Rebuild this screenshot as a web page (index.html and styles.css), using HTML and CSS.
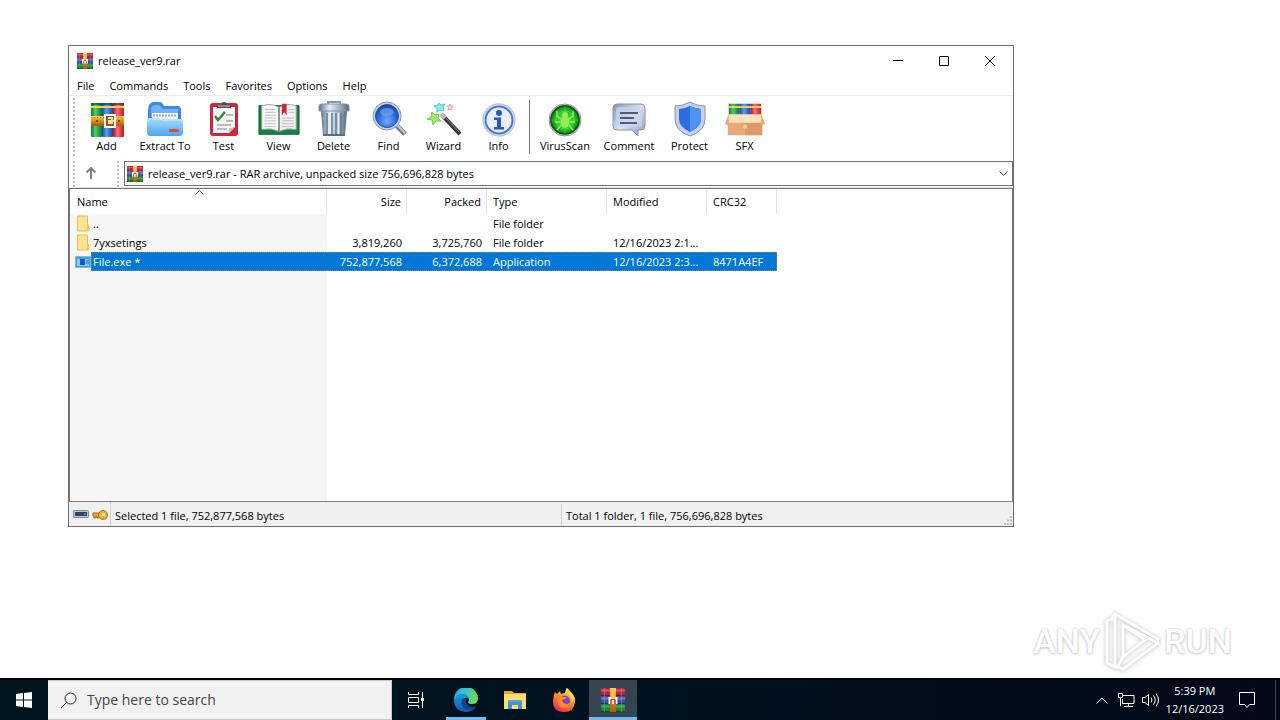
FILE: index.html
```html
<!DOCTYPE html>
<html lang="en">
<head>
<meta charset="utf-8">
<title>release_ver9.rar</title>
<link rel="stylesheet" href="styles.css">
</head>
<body>
<svg class="defs" aria-hidden="true">
  <defs>
    <linearGradient id="gold" x1="0" y1="0" x2="0" y2="1"><stop offset="0" stop-color="#ffd257"/><stop offset=".5" stop-color="#d98a1c"/><stop offset="1" stop-color="#a85c10"/></linearGradient>
    <linearGradient id="bRed"><stop offset="0" stop-color="#a8162e"/><stop offset=".4" stop-color="#ff6a70"/><stop offset="1" stop-color="#b81c30"/></linearGradient>
    <linearGradient id="bBlue"><stop offset="0" stop-color="#1246a8"/><stop offset=".4" stop-color="#5b9cf5"/><stop offset="1" stop-color="#1746a0"/></linearGradient>
    <linearGradient id="bGreen"><stop offset="0" stop-color="#0c7a34"/><stop offset=".4" stop-color="#4fce6b"/><stop offset="1" stop-color="#0b7433"/></linearGradient>
    <linearGradient id="sky" x1="0" y1="0" x2="0" y2="1"><stop offset="0" stop-color="#a9dcff"/><stop offset="1" stop-color="#4aa5ee"/></linearGradient>
    <linearGradient id="steel"><stop offset="0" stop-color="#5f7286"/><stop offset=".35" stop-color="#e3ebf2"/><stop offset=".7" stop-color="#9fb1c2"/><stop offset="1" stop-color="#55687c"/></linearGradient>
    <linearGradient id="silver" x1="0" y1="0" x2="1" y2="1"><stop offset="0" stop-color="#8194b5"/><stop offset=".5" stop-color="#d9e3f2"/><stop offset="1" stop-color="#8294b4"/></linearGradient>
    <radialGradient id="lens" cx=".5" cy=".7" r=".7"><stop offset="0" stop-color="#74abff"/><stop offset=".6" stop-color="#2868dc"/><stop offset="1" stop-color="#153fa4"/></radialGradient>
    <radialGradient id="radar"><stop offset="0" stop-color="#6be535"/><stop offset=".7" stop-color="#2bb824"/><stop offset="1" stop-color="#118a1b"/></radialGradient>
    <linearGradient id="edgeA" x1="0" y1="0" x2="1" y2=".3"><stop offset="0" stop-color="#2aa8e0"/><stop offset=".5" stop-color="#31c6c8"/><stop offset="1" stop-color="#6ad95a"/></linearGradient>
    <linearGradient id="edgeB" x1="0" y1="0" x2="0" y2="1"><stop offset="0" stop-color="#1b9de2"/><stop offset="1" stop-color="#0f5cb0"/></linearGradient>
    <linearGradient id="fox" x1=".8" y1="0" x2=".3" y2="1"><stop offset="0" stop-color="#fff04a"/><stop offset=".45" stop-color="#ff9328"/><stop offset="1" stop-color="#f0284e"/></linearGradient>
    <symbol id="rar" viewBox="0 0 24 24">
      <rect x="0" y="0" width="24" height="8" fill="#b4243e"/><path d="M0 2.500h24" stroke="#d9536a" stroke-width="2"/><path d="M0 7.500h24" stroke="#611838"/>
      <rect x="0" y="8" width="24" height="8" fill="#3350b8"/><path d="M0 10.500h24" stroke="#6580dc" stroke-width="2"/><path d="M0 15.500h24" stroke="#1c2d70"/>
      <rect x="0" y="16" width="24" height="8" fill="#158440"/><path d="M0 18.500h24" stroke="#3dae58" stroke-width="2"/><path d="M0 23.500h24" stroke="#0b4a26"/>
      <path d="M3.500 0v24M20.500 0v24" stroke="#e0a32c" stroke-opacity=".5"/>
      <rect x="9" y="0" width="6" height="24" fill="url(#gold)"/>
      <rect x="7.500" y="9" width="9" height="7" fill="#fbf3e4"/>
      <path d="M10 16v-3a2 2 0 0 1 4 0v3" fill="none" stroke="#a8472c" stroke-width="1.500"/><path d="M12 3v8" stroke="#ffc043" stroke-width="3"/>
    </symbol>
    <symbol id="folder" viewBox="0 0 14 17"><path d="M1.500 1h10v11l1.500 1v3h-11.500z" fill="#ffe391" stroke="#e6bd54"/><path d="M11 16v-5l2-2v6z" fill="#f2c752"/></symbol>
  </defs>
</svg>

<main class="desktop">
  <section class="window" aria-label="release_ver9.rar">
    <header class="titlebar">
      <svg class="app-icon"><use href="#rar"/></svg>
      <h1 class="title">release_ver9.rar</h1>
      <button class="caption" aria-label="Minimize"><svg viewBox="0 0 10 10"><path d="M0 4.500h10"/></svg></button>
      <button class="caption" aria-label="Maximize"><svg viewBox="0 0 10 10"><path d="M.5.500h9v9h-9z"/></svg></button>
      <button class="caption" aria-label="Close"><svg viewBox="0 0 10 10"><path d="M0 0l10 10M10 0L0 10"/></svg></button>
    </header>

    <nav class="menubar">
      <button>File</button><button>Commands</button><button>Tools</button><button>Favorites</button><button>Options</button><button>Help</button>
    </nav>

    <div class="toolbar">
      <span class="grip"></span>
      <button class="tool"><svg viewBox="0 0 36 36">
        <rect x="2" y="2" width="11" height="34" rx="1" fill="url(#bGreen)"/><rect x="13" y="2" width="11" height="34" rx="1" fill="url(#bBlue)"/><rect x="24" y="2" width="11" height="34" rx="1" fill="url(#bRed)"/>
        <path d="M2 6h33" stroke="#f1d04a" stroke-width="2"/><path d="M2 3h33" stroke="#10303a" stroke-opacity=".5" stroke-width="2"/>
        <rect x="2" y="15" width="33" height="10" fill="url(#gold)"/><path d="M2 16.500h33M2 23.500h33" stroke="#8a4c12" stroke-opacity=".6" stroke-dasharray="1 2"/>
        <rect x="16" y="14" width="10" height="12" fill="#9c5518" stroke="#fff" stroke-width="2"/><path d="M19 17h4v5h-4M19 20h7" fill="none" stroke="#ffe0a0" stroke-width="2"/><circle cx="30" cy="20" r="1" fill="#5a2d08"/><circle cx="8" cy="20" r="1" fill="#5a2d08"/>
      </svg>Add</button>
      <button class="tool wide"><svg viewBox="0 0 36 36">
        <path d="M1 10q0-8 5-9h7q2 0 4 4h14q3 0 3 4v10H1z" fill="#3f86e6"/><path d="M4 9q0-5 4-5h4l4 4h15v8H4z" fill="#6fb2f7"/>
        <path d="M5 12h26v8H5z" fill="#f6f8fb"/><path d="M6 14.500h24" stroke="#9ea9b6" stroke-width="2" stroke-dasharray="2 1"/>
        <path d="M0 20q0-3 3-3h8l3 1h19q3 0 3 3v10q0 4-4 4H4q-4 0-4-4z" fill="url(#sky)"/><path d="M1 21q0-3 3-3h8l3 1h18q2 0 2 2" stroke="#d2f0ff" fill="none"/>
        <rect x="22" y="28" width="10" height="3" rx="1" fill="#e64b32"/>
      </svg>Extract To</button>
      <button class="tool"><svg viewBox="0 0 36 36">
        <rect x="4" y="2" width="28" height="33" rx="3" fill="#d3243c"/><path d="M7 6h22v20l-6 6H7z" fill="#f8f8f8"/><path d="M29 26l-6 6v-5z" fill="#b9bec4"/>
        <path d="M11 7V4h4q0-3 3-3t3 3h4v3z" fill="#4b4f57"/><path d="M12 5h12" stroke="#c3c7cd"/>
        <path d="M9 15l3 4 7-8" fill="none" stroke="#268b3c" stroke-width="2.500"/><path d="M20 14h7M20 20h7M11 24h14M11 28h10" stroke="#a3a8b0" stroke-width="1.500"/>
      </svg>Test</button>
      <button class="tool"><svg class="broad" viewBox="0 0 44 36">
        <path d="M1 4h42v30H1z" fill="#168440" stroke="#0d5d2b"/><path d="M4 4q11-3 18 2v25q-8-4-18-2z" fill="#fbfbfa" stroke="#9aa3a0"/><path d="M40 4q-11-3-18 2v25q8-4 18-2z" fill="#f2f2f0" stroke="#9aa3a0"/>
        <path d="M7 8h12M7 11h12M7 14h12M7 17h12M7 20h12M7 23h12M7 26h12M32 8h6M32 11h6M25 17h13M25 20h13M25 23h13M25 26h13" stroke="#bdbdbb"/>
        <path d="M22 6v26" stroke="#77807b" stroke-width="1.500"/><path d="M25 2h5v12l-2.500-3-2.500 3z" fill="#cb2838"/>
      </svg>View</button>
      <button class="tool"><svg viewBox="0 0 36 36">
        <path d="M12 4V1h12v3" fill="none" stroke="#8798aa" stroke-width="2"/><path d="M5 10h26l-2 25H7z" fill="url(#steel)"/><path d="M11 12v21M16 12v21M20 12v21M25 12v21" stroke="#667a8e" stroke-width="1.500"/><path d="M13 12v21M22.500 12v21" stroke="#e8f1f8" stroke-width="1.500"/>
        <path d="M3 5q0-2 3-2h24q3 0 3 2v5H3z" fill="url(#steel)" stroke="#8496a8"/><path d="M7 34h22" stroke="#5a6d80" stroke-width="2"/>
      </svg>Delete</button>
      <button class="tool"><svg viewBox="0 0 36 36">
        <path d="M25 24l9 9" stroke="#777b82" stroke-width="5"/><path d="M26 24l8 8" stroke="#c8ccd2" stroke-width="2"/><circle cx="16" cy="15" r="14" fill="#c6d3e5" stroke="#8496b6"/><circle cx="16" cy="15" r="11.500" fill="url(#lens)" stroke="#2650a3"/><ellipse cx="16" cy="11" rx="7" ry="4" fill="#7da8ed" opacity=".6"/>
      </svg>Find</button>
      <button class="tool"><svg viewBox="0 0 36 36">
        <path d="M16 14l18 19" stroke="#33363b" stroke-width="4"/><path d="M16 13l17 18" stroke="#858b93"/><path d="M15 13l4 4" stroke="#b1b8be" stroke-width="4"/>
        <path d="M6 11l3 3 4-1-1 4 3 3-5 0-3 4-1-5-5-1 4-2z" fill="#a4e974" stroke="#71cc44"/><path d="M13 2l2 2 4-1-2 3 1 4-4-1-3 2 0-4-3-2 4-1z" fill="#8deaf3" stroke="#4bc9dc"/><path d="M24 3l1 2h2.500l-2 1.500.5 2.500-2-1-2 1 .5-2.500-2-1.500h2.500z" fill="#ffdce1" stroke="#ef9bab"/>
      </svg>Wizard</button>
      <button class="tool"><svg viewBox="0 0 36 36">
        <circle cx="18" cy="19" r="16" fill="#dfe8f7" stroke="#b8c8e4" stroke-width="1.500"/><circle cx="18" cy="19" r="13.500" fill="#e9edf4" stroke="#4d75c4" stroke-width="2"/><circle cx="18" cy="12" r="3" fill="#2456cc"/><path d="M13 16.500h7V26h3v2.500H13V26h3v-7h-3z" fill="#2456cc"/>
      </svg>Info</button>
      <span class="divider"></span>
      <button class="tool wide"><svg viewBox="0 0 36 36">
        <circle cx="18" cy="19" r="16" fill="#e3e7e3" stroke="#8b938c"/><circle cx="18" cy="19" r="14" fill="url(#radar)" stroke="#0a5a1a" stroke-width="2"/><path d="M18 5v28M4 19h28" stroke="#3fe03a" opacity=".6"/><circle cx="18" cy="19" r="9" fill="none" stroke="#6ff251" opacity=".5"/>
        <ellipse cx="18" cy="21" rx="4.500" ry="6" fill="#8df05c"/><circle cx="18" cy="14" r="3" fill="#8df05c"/><path d="M14 18l-4-3v-5M22 18l4-3v-5M13 21H8M23 21h5M14 24l-4 5M22 24l4 5" fill="none" stroke="#8df05c" stroke-width="1.500"/>
      </svg>VirusScan</button>
      <button class="tool wider"><svg viewBox="0 0 36 36">
        <path d="M6 3h24q4 0 4 4v18q0 4-4 4h-3v6l-6-6H6q-4 0-4-4V7q0-4 4-4z" fill="url(#silver)" stroke="#8797b4"/><rect x="5" y="6" width="26" height="20" rx="2" fill="#cbd7ea" opacity=".65"/><path d="M9 12h18M9 17h14M9 22h17" stroke="#4c5b78" stroke-width="2"/>
      </svg>Comment</button>
      <button class="tool"><svg viewBox="0 0 36 36">
        <path d="M18 1q7 4 15 4v13q0 12-15 17Q3 30 3 18V5q8 0 15-4z" fill="#c6d1e1" stroke="#8797b1"/><path d="M18 5q6 3 11 3v10q0 8-11 13Q7 26 7 18V8q5 0 11-3z" fill="#2e6ce0"/><path d="M18 5q6 3 11 3v10q0 8-11 13z" fill="#4f92f5"/>
      </svg>Protect</button>
      <button class="tool"><svg class="broad" viewBox="0 0 44 36">
        <path d="M5 2h11v15H5z" fill="url(#bGreen)"/><path d="M16 2h12v15H16z" fill="url(#bBlue)"/><path d="M28 2h11v15H28z" fill="url(#bRed)"/><path d="M5 5.500h34" stroke="#f2ce4c" stroke-width="2"/>
        <path d="M4 20h36v15H4z" fill="#e8a97a"/><path d="M22 21h18v14H22z" fill="#dc9a69"/><path d="M5 13h34l2 9H3z" fill="#fbe2ba"/><path d="M5 13L1 23l4 2zM39 13l4 10-4 2z" fill="#eca66a"/><path d="M20 24h4v4h-4z" fill="#f8c991"/>
      </svg>SFX</button>
    </div>

    <div class="addressbar">
      <span class="grip"></span>
      <button class="up" aria-label="Up one level"><svg viewBox="0 0 12 12"><path d="M6 12V1M1.500 5.500L6 1l4.500 4.500"/></svg></button>
      <span class="grip"></span>
      <label class="path">
        <svg class="app-icon"><use href="#rar"/></svg>
        <select aria-label="Archive path"><option>release_ver9.rar - RAR archive, unpacked size 756,696,828 bytes</option></select>
        <svg class="chevron" viewBox="0 0 9 6"><path d="M.5.500l4 4 4-4"/></svg>
      </label>
    </div>

    <div class="filelist">
      <table>
        <colgroup><col class="c-name"><col class="c-num"><col class="c-num"><col class="c-type"><col class="c-date"><col class="c-crc"></colgroup>
        <thead>
          <tr><th class="sorted">Name<svg class="sort" viewBox="0 0 9 5"><path d="M.5 4.500l4-4 4 4"/></svg></th><th class="num">Size</th><th class="num">Packed</th><th>Type</th><th>Modified</th><th>CRC32</th></tr>
        </thead>
        <tbody>
          <tr><td><span class="entry"><svg class="file-icon"><use href="#folder"/></svg><span class="name">..</span></span></td><td></td><td></td><td>File folder</td><td></td><td></td></tr>
          <tr><td><span class="entry"><svg class="file-icon"><use href="#folder"/></svg><span class="name">7yxsetings</span></span></td><td class="num">3,819,260</td><td class="num">3,725,760</td><td>File folder</td><td>12/16/2023 2:1...</td><td></td></tr>
          <tr class="selected"><td><span class="entry"><svg class="file-icon exe" viewBox="0 0 16 12"><path d="M.5.500h15v11H.5z" fill="#3f9ee8" stroke="#8bb7dc"/><path d="M2 3h12v7H2z" fill="#8cc4f2"/><path d="M5 3h5v6H5z" fill="#0b62b8"/><path d="M11 5h3M11 7h3" stroke="#1677c9"/></svg><span class="name">File.exe *</span></span></td><td class="num">752,877,568</td><td class="num">6,372,688</td><td>Application</td><td>12/16/2023 2:3...</td><td>8471A4EF</td></tr>
        </tbody>
      </table>
    </div>

    <footer class="statusbar">
      <div class="status-icons">
        <svg class="disk" viewBox="0 0 16 8"><rect x=".5" y=".5" width="15" height="7" rx="1" fill="#b8c4d0" stroke="#7c8b9b"/><rect x="2" y="2" width="12" height="4" fill="#32485a"/><path d="M11 4h2" stroke="#5fd06f"/></svg>
        <svg class="key" viewBox="0 0 16 10"><path d="M1 3h8v3H7v2H5V6H4v2H2V6H1z" fill="#e9a62c" stroke="#a96f12"/><ellipse cx="11" cy="5" rx="4.500" ry="4.500" fill="#f0b13b" stroke="#b0700f"/><ellipse cx="11.500" cy="4.500" rx="1.500" ry="1.500" fill="#fff3d2"/></svg>
      </div>
      <p class="status selected-info">Selected 1 file, 752,877,568 bytes</p>
      <p class="status">Total 1 folder, 1 file, 756,696,828 bytes</p>
      <svg class="resize" viewBox="0 0 9 9"><path d="M7 0h2v2H7zM4 3.500h2v2H4zM7 3.500h2v2H7zM1 7h2v2H1zM4 7h2v2H4zM7 7h2v2H7z"/></svg>
    </footer>
  </section>

  <div class="watermark">
    <span>ANY</span>
    <svg viewBox="0 0 58 62"><path d="M12 10H4v43l10 5" /><path d="M12 4v52l8 3 35-26v-4z"/><path d="M20 15v32l22-17z"/><path d="M12 4l-4 5M20 15l33 17M20 47l-5 9"/></svg>
    <span>RUN</span>
  </div>
</main>

<footer class="taskbar">
  <button class="start" aria-label="Start"><svg viewBox="0 0 16 16"><path d="M0 2l7-1v6.500H0zM8 1l8-1v7.500H8zM0 8.500h7V15l-7-1zM8 8.500h8V16l-8-1z"/></svg></button>
  <label class="search">
    <svg viewBox="0 0 17 17"><circle cx="10.500" cy="6.500" r="5.500"/><path d="M6.500 10.500L1 16"/></svg>
    <input type="text" placeholder="Type here to search" aria-label="Search">
  </label>
  <div class="tasks">
    <button class="task" aria-label="Task View"><svg class="taskview" viewBox="0 0 17 16"><path d="M.5 0v2.500h10V0M.5 5.500h10v5H.5zM.5 16v-2.500h10V16M14.500 0v16"/><path d="M13 6h3v3h-3z" fill="#fff" stroke="none"/></svg></button>
    <button class="task running" aria-label="Microsoft Edge"><svg viewBox="0 0 24 24">
      <path d="M0 12A12 12 0 0 1 24 10q0 6-6 6-4 0-4-2 2-2 0-5-4-5-9-2-3 1-5 5z" fill="url(#edgeA)"/>
      <path d="M0 12q1-6 8-6 6 0 7 5-2-2-4-1-4 2-3 6 2 6 8 5 3 0 6-2-4 5-10 5Q0 23 0 12z" fill="url(#edgeB)"/>
      <path d="M8 12q-2 9 6 10 5 0 8-4-5 2-8-1-3-2-2-6-3-2-4 1z" fill="#10418f"/>
    </svg></button>
    <button class="task" aria-label="File Explorer"><svg viewBox="0 0 24 24"><path d="M1 3h8l2 2h12v16H1z" fill="#e1a92d"/><path d="M1 6h22v15H1z" fill="#ffdc6e"/><path d="M5 21v-8q0-1 1-1h12q1 0 1 1v8h-4v-4H9v4z" fill="#3c93d5"/><path d="M6 13h12" stroke="#67b8ed"/></svg></button>
    <button class="task" aria-label="Firefox"><svg viewBox="0 0 24 24">
      <path d="M3 4l2 2 3-3 1 3q2-1 4-1 0-3 2-5 2 3 5 5 4 5 3 9-1 10-11 10Q1 24 1 13q0-5 2-9z" fill="url(#fox)"/><circle cx="12.500" cy="13" r="5.500" fill="#7d3fd0"/><path d="M5 9q4-2 6 0h4q-2 3-5 3 1 4 5 4 3 0 5-3-1 7-8 7-8-1-7-11z" fill="#ff8b27"/><path d="M15 4q6 5 4 11 3-2 3-5-1-4-7-10-2 2 0 4z" fill="#ffd83d"/>
    </svg></button>
    <button class="task running active" aria-label="WinRAR"><svg><use href="#rar"/></svg></button>
  </div>
  <div class="tray">
    <svg class="t-up" viewBox="0 0 12 7"><path d="M.5 6.500L6 1l5.500 5.500"/></svg>
    <svg class="t-net" viewBox="0 0 17 14"><path d="M5 2.500h11v8H4.500V6M10.500 10.500v3M6 13.500h9M.5.500h4v4h-4zM2.500 5v8"/></svg>
    <svg class="t-vol" viewBox="0 0 17 14"><path d="M.5 4.500H3l3.500-3v11L3 9.500H.5zM9 4.500q2 2.500 0 5M11.500 2.500q3.500 4.500 0 9M14 .5q5 6.500 0 13"/></svg>
    <time class="clock"><span>5:39 PM</span><span>12/16/2023</span></time>
    <button class="notify" aria-label="Notifications"><svg viewBox="0 0 16 16"><path d="M.5.500h15v12h-5l-2.500 3-2.500-3h-5z"/></svg></button>
    <button class="show-desktop" aria-label="Show desktop"></button>
  </div>
</footer>
</body>
</html>
```
FILE: styles.css
```css
* { box-sizing: border-box; }

body {
  margin: 0;
  height: 100vh;
  display: flex;
  flex-direction: column;
  background: #fff;
  color: #000;
  font: 11px/16px "Open Sans", "Noto Sans", sans-serif;
}

button, input, select {
  margin: 0;
  padding: 0;
  border: 0;
  background: none;
  color: inherit;
  font: inherit;
}

svg { display: block; flex: none; }
.defs { position: absolute; width: 0; height: 0; }

.desktop { position: relative; flex: 1; }

.window {
  position: absolute;
  inset: 45px 266px 151px 68px;
  display: flex;
  flex-direction: column;
  border: 1px solid #6d6d6d;
  background: #fff;
}

.titlebar { display: flex; align-items: center; height: 29px; padding-left: 8px; }
.app-icon { width: 16px; height: 16px; }
.title { flex: 1; margin: 0 0 0 5px; font-size: 11px; font-weight: 400; }
.caption { width: 46px; height: 28px; display: grid; place-items: center; }
.caption svg { width: 10px; height: 10px; fill: none; stroke: #000; }

.menubar { display: flex; gap: 15px; height: 21px; padding: 3px 8px 1px; border-bottom: 1px solid #ececec; }

.grip { width: 2px; align-self: stretch; background: repeating-linear-gradient(#bbb 0 2px, #fff 2px 4px); }

.toolbar { display: flex; height: 62px; padding: 2px 4px 0; }
.toolbar .grip { margin-right: 4px; }
.tool { display: flex; flex-direction: column; align-items: center; width: 55px; padding-top: 3px; gap: 1px; white-space: nowrap; }
.tool.wide { width: 62px; }
.tool.wider { width: 66px; }
.tool svg { width: 36px; height: 36px; }
.tool .broad { width: 42px; }
.divider { width: 1px; height: 54px; margin: 2px 4px 2px 3px; background: #777; }

.addressbar { display: flex; height: 31px; padding: 3px 0 0 4px; border-bottom: 1px solid #777; background: linear-gradient(#e2e2e2, #e2e2e2) 0 100% / 100% 1px no-repeat; }
.up { width: 34px; height: 24px; margin-right: 8px; padding-right: 2px; display: grid; place-items: center; }
.up svg { width: 12px; height: 12px; fill: none; stroke: #808080; stroke-width: 2; }
.path { flex: 1; display: flex; align-items: center; height: 25px; margin-left: 5px; padding: 0 4px 0 2px; border: 1px solid #707070; }
.path select { flex: 1; min-width: 0; margin: 0 5px; appearance: none; }
.chevron { width: 9px; height: 6px; fill: none; stroke: #444; }

.filelist {
  flex: 1;
  overflow: hidden;
  border-left: 1px solid #777;
  border-right: 1px solid #777;
  background: linear-gradient(#f6f6f6, #f6f6f6) 0 0 / 257px 100% no-repeat;
}
table { width: 707px; table-layout: fixed; border-collapse: separate; border-spacing: 0; }
.c-name { width: 257px; }
.c-num { width: 80px; }
.c-type { width: 120px; }
.c-date { width: 100px; }
.c-crc { width: 70px; }
th, td { padding: 0 5px 0 6px; text-align: left; font-weight: 400; white-space: nowrap; }
th { position: relative; height: 25px; border-right: 1px solid #e5e5e5; background: #fff; }
th.num, td.num { text-align: right; }
.sorted { padding-left: 7px; }
.sort { position: absolute; top: 1px; left: 49%; width: 9px; height: 5px; fill: none; stroke: #777; }
td { height: 19px; line-height: 17px; }
td:first-child { padding: 0; }
.entry { display: flex; align-items: center; height: 19px; padding-left: 5px; }
.file-icon { width: 16px; height: 17px; }
.file-icon.exe { height: 12px; }
.name { flex: 1; padding-left: 2px; line-height: 19px; }
.selected { color: #fff; }
.selected td:not(:first-child) { border: dotted #8a7f78; border-width: 1px 0; background: #0078d7; }
.selected td:last-child { border-right-width: 1px; }
.selected .name { border: dotted #8a7f78; border-width: 1px 0 1px 1px; padding-left: 1px; line-height: 17px; background: #0078d7; }

.statusbar { display: flex; height: 25px; border-top: 1px solid #828282; background: #f0f0f0; }
.status-icons { display: flex; gap: 3px; width: 42px; padding: 8px 0 0 4px; border-right: 1px solid #d0d0d0; }
.disk { width: 16px; height: 8px; }
.key { width: 16px; height: 10px; }
.status { margin: 2px 0 0; padding: 4px 4px 0; }
.selected-info { width: 451px; border-right: 1px solid #d0d0d0; }
.resize { width: 9px; height: 9px; margin: auto 1px 1px auto; fill: #bbb; }

.watermark {
  position: absolute;
  right: 48px;
  bottom: 6px;
  display: flex;
  align-items: center;
  gap: 3px;
  color: #fff;
  font: 500 34px/62px Roboto, "Liberation Sans", sans-serif;
  text-shadow: 0 0 2px #bbb, 0 1px 3px #ccc;
}
.watermark svg { width: 58px; height: 62px; fill: none; stroke: #fff; stroke-width: 3; filter: drop-shadow(0 0 1px #ccc) drop-shadow(0 1px 2px #ddd); }

.taskbar {
  display: flex;
  height: 42px;
  border-top: 2px solid #000;
  background: linear-gradient(90deg, #00141e, #00121f 50%, #020817);
  color: #fff;
}
.start { width: 48px; display: grid; place-items: center; }
.start svg { width: 16px; height: 16px; fill: #fff; }
.search { display: flex; align-items: center; gap: 10px; width: 344px; padding-left: 12px; border: 1px solid #c9c9c9; border-left: 0; background: #f2f2f2; }
.search svg { width: 17px; height: 17px; fill: none; stroke: #222; }
.search input { flex: 1; min-width: 0; outline: 0; font-size: 14px; line-height: 20px; }
.search input::placeholder { color: #444; opacity: 1; }
.tasks { display: flex; gap: 1px; }
.task { position: relative; display: grid; place-items: center; width: 48px; }
.task + .task { margin-left: 1px; }
.tasks .task + .task ~ .task { margin-left: 0; }
.task svg { width: 24px; height: 24px; }
.task .taskview { width: 17px; height: 16px; fill: none; stroke: #fff; }
.running::after { content: ""; position: absolute; inset: auto 4px 0; height: 3px; background: #76b9ed; }
.active { background: #36454f; }
.active::after { inset: auto 0 0; }
.tray { display: flex; align-items: center; margin-left: auto; gap: 7px; }
.tray svg { fill: none; stroke: #fff; }
.t-up { width: 12px; height: 7px; margin-right: 3px; }
.t-net, .t-vol { width: 17px; height: 14px; }
.clock { display: flex; flex-direction: column; align-items: center; font-size: 11px; line-height: 18px; }
.notify { display: grid; place-items: center; width: 32px; height: 40px; }
.notify svg { width: 16px; height: 16px; }
.show-desktop { align-self: stretch; width: 5px; margin-left: 5px; border-left: 1px solid #444b58; }
```
